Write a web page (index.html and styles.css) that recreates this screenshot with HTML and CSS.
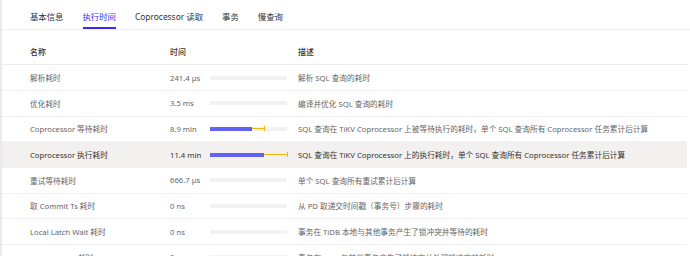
FILE: index.html
```html
<!DOCTYPE html>
<html lang="zh-CN">
<head>
  <meta charset="UTF-8" />
  <title>执行时间</title>
  <link rel="stylesheet" href="styles.css">
</head>
<body>
<div class="page">
  <div class="tabs">
    <div class="tab">基本信息</div>
    <div class="tab active">执行时间</div>
    <div class="tab">Coprocessor 读取</div>
    <div class="tab">事务</div>
    <div class="tab">慢查询</div>
  </div>

  <div class="table">
    <div class="row head">
      <div>名称</div>
      <div>时间</div>
      <div></div>
      <div>描述</div>
    </div>
    <div class="row">
      <div>解析耗时</div>
      <div>241.4 µs</div>
      <div class="bar"></div>
      <div>解析 SQL 查询的耗时</div>
    </div>
    <div class="row">
      <div>优化耗时</div>
      <div>3.5 ms</div>
      <div class="bar"></div>
      <div>编译并优化 SQL 查询的耗时</div>
    </div>
    <div class="row">
      <div>Coprocessor 等待耗时</div>
      <div>8.9 min</div>
      <div class="bar">
        <div class="fill" style="width: 42px"></div>
        <div class="whisker" style="left: 42px; width: 12px"></div>
      </div>
      <div>SQL 查询在 TiKV Coprocessor 上被等待执行的耗时，单个 SQL 查询所有 Coprocessor 任务累计后计算</div>
    </div>
    <div class="row hover">
      <div>Coprocessor 执行耗时</div>
      <div>11.4 min</div>
      <div class="bar">
        <div class="fill" style="width: 54px"></div>
        <div class="whisker" style="left: 54px; width: 23px"></div>
      </div>
      <div>SQL 查询在 TiKV Coprocessor 上的执行耗时，单个 SQL 查询所有 Coprocessor 任务累计后计算</div>
    </div>
    <div class="row">
      <div>重试等待耗时</div>
      <div>666.7 µs</div>
      <div class="bar"></div>
      <div>单个 SQL 查询所有重试累计后计算</div>
    </div>
    <div class="row">
      <div>取 Commit Ts 耗时</div>
      <div>0 ns</div>
      <div class="bar"></div>
      <div>从 PD 取递交时间戳（事务号）步骤的耗时</div>
    </div>
    <div class="row">
      <div>Local Latch Wait 耗时</div>
      <div>0 ns</div>
      <div class="bar"></div>
      <div>事务在 TiDB 本地与其他事务产生了锁冲突并等待的耗时</div>
    </div>
    <div class="row">
      <div>Resolve Lock 耗时</div>
      <div>0 ns</div>
      <div class="bar"></div>
      <div>事务在 TiKV 与其他事务产生了锁冲突并处理锁冲突的耗时</div>
    </div>
  </div>
</div>
</body>
</html>
```

FILE: styles.css
```css
body {
  margin: 0;
  background: #fff;
  font-family: "Noto Sans", "Noto Sans CJK SC", sans-serif;
  color: #333;
}
.page {
  border-left: 2px solid #e9e9f0;
  height: 256px;
  overflow: hidden;
}
.tabs {
  display: flex;
  gap: 19px;
  padding-left: 28px;
  height: 29px;
  border-bottom: 1px solid #f0f0f0;
}
.tab {
  font-size: 8.4px;
  line-height: 11px;
  padding-top: 11px;
  height: 16px;
  border-bottom: 2px solid transparent;
  color: #333;
}
.tab.active {
  color: #3a2cf2;
  border-bottom-color: #3a2cf2;
}
.table {
  margin-top: 9.6px;
}
.row {
  display: grid;
  grid-template-columns: 140px 40px 77px 1fr;
  align-items: center;
  height: 25.67px;
  box-sizing: border-box;
  padding-left: 28px;
  margin-right: 3px;
  border-bottom: 1px solid #f1f1f1;
  font-size: 7.7px;
  color: #666;
  white-space: nowrap;
}
.row > div:last-child {
  padding-left: 11px;
}
.row.head {
  color: #333;
  font-size: 7.9px;
  font-weight: 500;
  border-bottom-color: #ececec;
}
.row.hover {
  background: #f2f1f0;
  color: #333;
}
.bar {
  position: relative;
  height: 4px;
  background: #f2f2f2;
}
.fill {
  height: 4px;
  background: #6262f6;
}
.whisker {
  position: absolute;
  top: 1.5px;
  height: 1px;
  background: #f5b60a;
}
.whisker::after {
  content: "";
  position: absolute;
  right: -1px;
  top: -2px;
  width: 1px;
  height: 5px;
  background: #f5b60a;
}
```
